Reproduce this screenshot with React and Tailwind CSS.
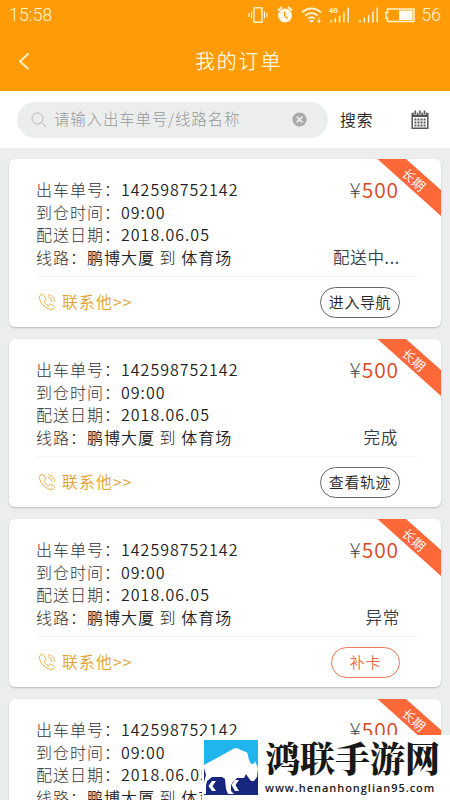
import React, { useState } from 'react';
import { CircleX } from 'lucide-react';

const orders = [
  { id: 1, no: '142598752142', time: '09:00', date: '2018.06.05', from: '鹏博大厦', to: '体育场', price: 500, status: '配送中...', action: '进入导航' },
  { id: 2, no: '142598752142', time: '09:00', date: '2018.06.05', from: '鹏博大厦', to: '体育场', price: 500, status: '完成', action: '查看轨迹' },
  { id: 3, no: '142598752142', time: '09:00', date: '2018.06.05', from: '鹏博大厦', to: '体育场', price: 500, status: '异常', action: '补卡', warn: true },
  { id: 4, no: '142598752142', time: '09:00', date: '2018.06.05', from: '鹏博大厦', to: '体育场', price: 500, status: '完成', action: '查看轨迹' },
];

function StatusIcons() {
  return (
    <svg width="170" height="20" viewBox="0 0 170 20" fill="none" stroke="#fff5d8">
      {/* vibrate */}
      <rect x="6" y="2.8" width="8" height="14.4" strokeWidth="1.4" />
      <path d="M3.5 6.5v7M1 8v4M16.5 6.5v7M19 8v4" strokeWidth="1.2" />
      {/* alarm */}
      <circle cx="37" cy="10.6" r="7" fill="#fff8e4" stroke="none" />
      <path d="M30 5.5l4-3.5M44 5.5l-4-3.5" strokeWidth="2" />
      <path d="M36.6 6.5v4.2l3 2.8" stroke="#ff9c05" strokeWidth="1.3" />
      {/* wifi */}
      <path d="M54 7.2Q63.500 -0.5 73 7.200M57.200 10.500Q63.500 5.500 69.800 10.500M60.200 13.500Q63.500 11.200 66.800 13.500" strokeWidth="1.8" />
      <path d="M61.500 15.500h4l-2 2.200zM71 12.500v5M69.200 15.500l1.800 2 1.800-2" fill="#fff5d8" strokeWidth="0.8" />
      {/* signals */}
      <path d="M83 15v2.500M87.300 13v4.500M91.600 10.500v7M95.900 7v10.500M100.200 2.500v15" strokeWidth="1.500" />
      <path d="M112 15v2.500M116.300 12.500v5M120.600 10v7.500M124.900 6.500v11M129.200 2.500v15" strokeWidth="1.500" />
      <text x="81" y="8" fontSize="7" fontWeight="700" fill="#fff5d8" stroke="none" fontFamily="Roboto, sans-serif">4G</text>
      {/* battery */}
      <path d="M139.500 4h26.500v12.500h-26.500v-3.500h-1.500v-5.500h1.500z" strokeWidth="1.500" />
      <rect x="151" y="5.500" width="13.500" height="9.500" fill="#fffdf6" stroke="none" />
    </svg>
  );
}

function PhoneIcon() {
  return (
    <svg width="18" height="18" viewBox="0 0 18 18" fill="none" stroke="#e9b14a" strokeWidth="1" strokeLinecap="round" strokeLinejoin="round">
      <path d="M3.300 1.500C1.700 2.200 1 3.800 1.500 5.600c1.300 4.700 4.900 8.900 9.700 10.600 2 .7 4.100.4 5-1.200.5-.8.300-1.500-.4-2l-2.500-1.500c-.7-.4-1.400-.2-1.900.4l-.6.8c-.3.300-.6.300-1 .1-1.700-1-3-2.600-3.700-4.400-.1-.4 0-.7.300-.9l.8-.6c.6-.5.700-1.100.4-1.800L5.800 2.300c-.5-1-1.500-1.300-2.500-.8z" />
      <path d="M10.500 1.800c3.500.3 5.900 2.900 6 6.600M10.500 4.500c2 .3 3.200 1.700 3.300 3.900" />
    </svg>
  );
}

function CalendarIcon() {
  return (
    <svg width="18" height="20" viewBox="0 0 18 20">
      <path d="M1.500 2.500h15v4.500h-15z" fill="#555" />
      <path d="M1.200 3v15.200h15.600v-15.200" fill="none" stroke="#555" strokeWidth="1.500" />
      <path d="M4.300 0.500v4M8.900 0.500v4M13.500 0.500v4" stroke="#fff" strokeWidth="3.200" />
      <path d="M4.300 0.500v3.500M8.900 0.500v3.500M13.500 0.500v3.500" stroke="#555" strokeWidth="1.600" />
      <path d="M3.500 9.500h11M3.500 12.500h11M3.500 15.500h11" stroke="#555" strokeWidth="1.800" strokeDasharray="1.900 1.130" />
    </svg>
  );
}

function Ribbon() {
  return (
    <svg className="absolute top-0 right-0" width="64" height="58" viewBox="0 0 64 58">
      <path d="M0.500 0H29L64 31V57z" fill="#fc6838" />
      <text x="0" y="0" fontSize="13" fontWeight="350" fill="#fff" textAnchor="middle" transform="translate(33.500 24.500) rotate(42)">长期</text>
    </svg>
  );
}

function Row({ label, children }) {
  return (
    <p className="h-[22.5px] whitespace-nowrap">
      <span className="font-light text-[#333]">{label}：</span>
      {children}
    </p>
  );
}

function OrderCard({ order }) {
  return (
    <section className="relative h-[168px] shrink-0 overflow-hidden rounded-md bg-white pl-[27px] pr-[23px] pt-[19px] shadow-[0_1px_2px_rgba(0,0,0,0.22)]">
      <Ribbon />
      <div className="flex h-[99px] justify-between border-b border-[#f3f3f3] pr-[18px]">
        <div className="text-[16px] leading-[22.5px] tracking-[1px] text-[#222]">
          <Row label="出车单号">{order.no}</Row>
          <Row label="到仓时间">{order.time}</Row>
          <Row label="配送日期">{order.date}</Row>
          <Row label="线路">
            {order.from}<span className="font-light"> 到 </span>{order.to}
          </Row>
        </div>
        <div className="flex h-[90px] flex-col items-end justify-between">
          <p className="pr-px text-[21px] leading-[22px] tracking-[0.9px] text-[#d9481f]">
            <span className="font-light text-[#555]">¥</span>{order.price}
          </p>
          <p className={`text-[16.5px] leading-[22px] tracking-[0.7px] text-[#333c48] ${order.status === '完成' ? 'pr-0.5' : ''}`}>
            {order.status}
          </p>
        </div>
      </div>
      <div className="flex h-[50px] items-center justify-between pr-[18px]">
        <button className="flex items-center gap-1.5 pl-0.5 text-[15.8px] tracking-[1.2px] text-[#e2a02c]">
          <PhoneIcon />
          <span>联系他&gt;&gt;</span>
        </button>
        <button
          className={order.warn
            ? 'h-[31px] w-[69px] rounded-full border border-[#ea7a5a] text-[15px] tracking-[0.8px] text-[#ee6847]'
            : 'h-[31px] w-[80px] rounded-full border border-[#666] text-[15px] tracking-[0.6px] text-[#222]'}
        >
          {order.action}
        </button>
      </div>
    </section>
  );
}

function SiteBanner() {
  return (
    <div className="absolute right-0 bottom-0 flex h-[65px] w-[248px] bg-white pt-[5px] pl-0.5">
      <svg className="shrink-0" width="54" height="55" viewBox="0 0 54 55">
        <rect width="54" height="28" fill="#20b5ed" />
        <rect y="27" width="54" height="28" fill="#17277d" />
        {/* bison body */}
        <path d="M0 25L11 19 21 13.500 30 8.500 33 8 37 10 43 12.500 45 17 47 23 50 24 51 21 54 28 53 37 50 41 47 41 44 37 42 34 40 38H33L29 42 27 45V51L30 54H24L22 49 21 39 18 37H8L3 41 2 46V54H0z" fill="#fff" />
        <path d="M0 28L2 35 0 42z" fill="#17277d" />
        <path d="M47 12L46 17 49 20 49 23 47 24 45 20 44 16z" fill="#20b5ed" />
        {/* hooves */}
        <path d="M8 41H12L8.500 46 12 51H8L4.500 46z" fill="#fff" />
        <path d="M31 40H35L31.500 45 35 51H31L27.500 45z" fill="#fff" />
      </svg>
      <div className="pl-[7px] text-[#181818]">
        <h2 className="h-[41px] whitespace-nowrap font-['Noto_Serif_CJK_SC','Noto_Sans_CJK_SC',serif] text-[35px] leading-[34px] font-black">鸿联手游网</h2>
        <p className="-mt-px text-[11px] leading-[16px] font-semibold tracking-[0.96px] whitespace-nowrap font-['Open_Sans',sans-serif]">www.henanhonglian95.com</p>
      </div>
    </div>
  );
}

export default function App() {
  const [query, setQuery] = useState('');

  return (
    <div className="relative flex h-[800px] w-[450px] flex-col overflow-hidden bg-[#eceeed] font-['Noto_Sans_CJK_SC',sans-serif] font-[350]">
      <header className="h-[91px] shrink-0 bg-[#ff9c05] text-[#fff5d8]">
        <div className="flex h-[30px] items-center justify-between pr-[9px] pl-[9px] font-[Roboto,sans-serif] text-[17.5px] font-light">
          <span className="tracking-[0.2px]">15:58</span>
          <div className="flex items-center gap-1">
            <StatusIcons />
            <span>56</span>
          </div>
        </div>
        <div className="flex h-[61px] items-center">
          <svg className="ml-[18px]" width="12" height="18" viewBox="0 0 12 18" fill="none" stroke="#fff1c8" strokeWidth="1.8">
            <path d="M10.500 1.500L2 9.500L10.500 17" />
          </svg>
          <h1 className="ml-[165px] text-[20px] font-[350] tracking-[1.8px]">我的订单</h1>
        </div>
      </header>

      {/* Search bar */}
      <div className="flex h-[57px] shrink-0 items-center bg-white pl-[17px]">
        <div className="flex h-9 w-[311px] items-center rounded-full bg-[#eceeed] pr-[19px] pl-3.5">
          <svg width="16" height="16" viewBox="0 0 16 16" fill="none" stroke="#b5b5b5" strokeWidth="1">
            <circle cx="6.500" cy="6.500" r="5.500" />
            <path d="M10.500 10.500L15 15" />
          </svg>
          <input
            className="ml-[7px] -mt-0.5 min-w-0 flex-1 bg-transparent text-[15.5px] font-light tracking-[0.8px] outline-none placeholder:text-[#999]"
            placeholder="请输入出车单号/线路名称"
            value={query}
            onChange={e => setQuery(e.target.value)}
          />
          <CircleX size={19} fill="#aaa" stroke="#eceeed" strokeWidth={2} onClick={() => setQuery('')} />
        </div>
        <button className="ml-3 text-[15.8px] tracking-[1px] text-[#222]">搜索</button>
        <button className="ml-[37px]"><CalendarIcon /></button>
      </div>

      <main className="flex flex-col gap-3 px-[9px] pt-[11px]">
        {orders.map(order => <OrderCard key={order.id} order={order} />)}
      </main>

      <SiteBanner />
    </div>
  );
}
